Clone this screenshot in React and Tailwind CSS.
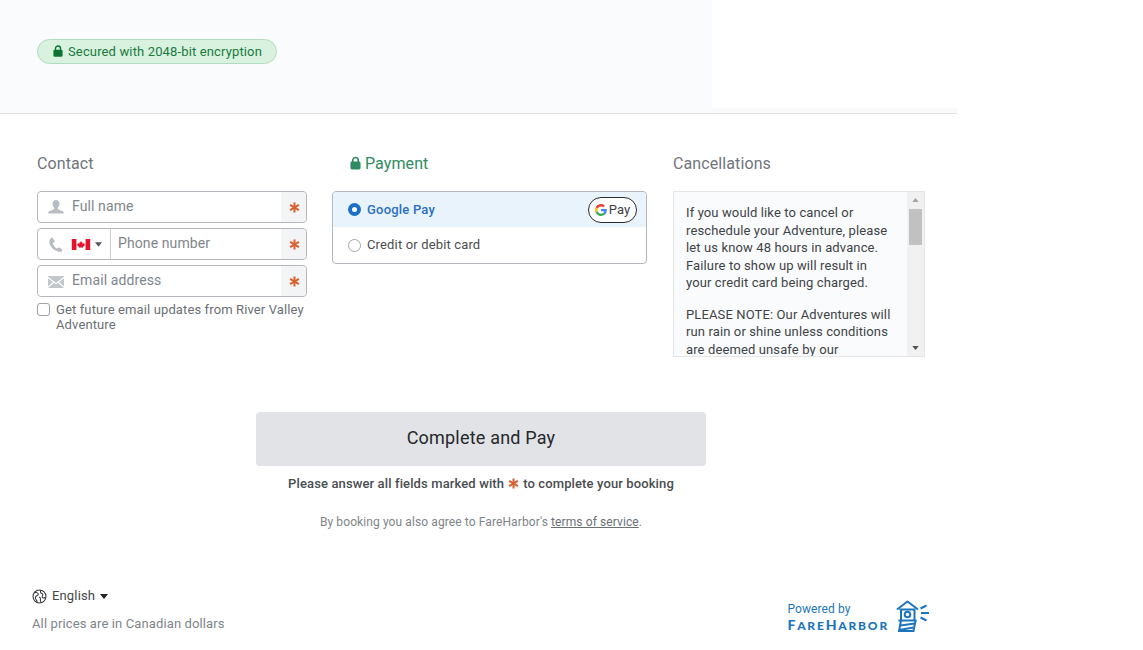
import { useState } from "react";

const Asterisk = ({ className = "" }) => (
  <svg viewBox="0 0 12 12" className={`w-[11px] h-[11px] shrink-0 ${className}`}>
    <g stroke="#d9602f" strokeWidth="2.2">
      <line x1="6" y1="0.5" x2="6" y2="11.5" />
      <line x1="1.2" y1="3.2" x2="10.8" y2="8.8" />
      <line x1="10.8" y1="3.2" x2="1.2" y2="8.8" />
    </g>
  </svg>
);

const Lock = ({ className, color }) => (
  <svg viewBox="0 0 12 14" className={className}>
    <path d="M3 6V4a3 3 0 0 1 6 0v2" fill="none" stroke={color} strokeWidth="1.7" />
    <rect x="0.5" y="5.4" width="11" height="8.600" rx="1.6" fill={color} />
  </svg>
);

const Flag = () => (
  <svg viewBox="0 0 20 12" className="w-[20px] h-[11px] shrink-0">
    <rect width="20" height="12" fill="#fff" />
    <rect width="5" height="12" fill="#e8112d" />
    <rect x="15" width="5" height="12" fill="#e8112d" />
    <path
      d="M10 2l.9 1.7.9-.4-.3 2 1.3-.9.4.9 1-.2-.4 1.4.5.4-2.3 1.800.2.900-2-.3h-.4l-2 .3.2-.9-2.300-1.800.5-.4-.4-1.400 1 .2.4-.9 1.300.9-.3-2 .9.4z"
      fill="#e8112d"
    />
  </svg>
);

const GoogleG = () => (
  <svg viewBox="0 0 48 48" className="w-[12px] h-[12px] shrink-0">
    <path fill="#EA4335" d="M24 9.500c3.500 0 6.700 1.200 9.200 3.600l6.900-6.900C35.900 2.400 30.500 0 24 0 14.600 0 6.500 5.400 2.600 13.200l8 6.200C12.500 13.600 17.800 9.500 24 9.500z" />
    <path fill="#4285F4" d="M47 24.500c0-1.600-.1-3.100-.4-4.500H24v9h12.900c-.6 3-2.200 5.500-4.700 7.200l7.700 6C44.400 38.100 47 31.900 47 24.500z" />
    <path fill="#FBBC05" d="M10.500 28.600c-.5-1.400-.8-3-.8-4.600s.3-3.200.8-4.600l-8-6.200C.9 16.500 0 20.100 0 24s.9 7.500 2.600 10.800l7.900-6.200z" />
    <path fill="#34A853" d="M24 48c6.500 0 11.900-2.100 15.900-5.800l-7.700-6c-2.200 1.400-4.900 2.300-8.200 2.300-6.200 0-11.500-4.200-13.400-9.800l-8 6.200C6.500 42.600 14.600 48 24 48z" />
  </svg>
);

const Caret = ({ className = "w-[8px] h-[5px]", color = "#55595f" }) => (
  <svg viewBox="0 0 8 5" className={`shrink-0 ${className}`}>
    <path d="M0 0h8L4 5z" fill={color} />
  </svg>
);

const Globe = () => (
  <svg viewBox="0 0 16 16" className="w-[15px] h-[15px] shrink-0" fill="none" stroke="#33373b" strokeWidth="1.1">
    <circle cx="8" cy="8" r="6.900" />
    <path d="M3 3.500c1.500.5 2.500.2 3.500 1.300 1 1.200-.8 2-1.700 2.600C3.700 8.200 3.300 9.500 4 10.800c.5.900 1.300 1.300 1.500 2.900" />
    <path d="M9.500 1.400C8.600 3 9.200 4.300 10.400 4.700c1.200.4 1.400 1.400.9 2.200-.7 1-.6 2 .2 2.500.8.500 1.800.1 2.800-.6" />
    <path d="M7.500 8.500c1 .3 1.700 1.200 1.500 2.300-.2 1-.2 2 .5 3.500" />
  </svg>
);

const Lighthouse = () => (
  <svg viewBox="0 0 34 32" className="w-[34px] h-[32px] shrink-0" fill="none" stroke="#1c75bc" strokeWidth="2">
    <path d="M1 9.500 11.500 1.500 22 9.500" strokeLinejoin="round" />
    <path d="M3.500 9.500h16M5 9.500v10.500M18.500 9.500V20M2.500 20.500h18" />
    <circle cx="11.500" cy="14.500" r="2.800" />
    <path d="M5 20.500 3 31h14.500l2-10.500M4.500 25.500l14-2M3.500 30l13.500-2.500" />
    <path d="M24.500 8.500l6-3M25 13h8M24.500 17.500l6 3" />
  </svg>
);

const RequiredCell = () => (
  <div className="w-[25px] self-stretch bg-[#f3f4f5] flex items-center justify-center pt-[1px] pl-[1px] rounded-r-[4px] shrink-0">
    <Asterisk />
  </div>
);

const Field = ({ children }) => (
  <div className="h-[32px] flex items-center border border-[#b4b8bd] rounded-[4px] bg-white">
    {children}
  </div>
);

const inputClass =
  "flex-1 min-w-0 h-full bg-transparent outline-none text-[14px] tracking-[0.1px] pb-[2px] placeholder:text-[#80868d]";

function ContactForm() {
  const [optIn, setOptIn] = useState(false);

  return (
    <div className="w-[270px] shrink-0">
      <h2 className="text-[16px] leading-[20px] tracking-[0.1px] text-[#70757c] mb-[17px]">Contact</h2>
      <div className="flex flex-col gap-[5px]">
        <Field>
          <div className="w-[34px] shrink-0 pl-[10px] pb-[1px]">
            <svg viewBox="0 0 16 14" className="w-[16px] h-[14px]">
              <path
                d="M8 0c2.200 0 3.500 1.600 3.500 3.800 0 1.600-.7 3-1.600 3.800v1.300c0 .6 4.600 1.400 5.600 3.100.2.4.3.9.4 1.400H.1c.1-.5.2-1 .4-1.400 1-1.700 5.600-2.500 5.600-3.100V7.600C5.200 6.800 4.500 5.400 4.500 3.800 4.500 1.600 5.800 0 8 0z"
                fill="#b9bdc2"
              />
            </svg>
          </div>
          <input placeholder="Full name" className={inputClass} />
          <RequiredCell />
        </Field>
        <Field>
          <div className="w-[73px] self-stretch shrink-0 flex items-center border-r border-[#c9ccd0]">
            <svg viewBox="0 0 10.500 16" preserveAspectRatio="none" className="w-[13px] h-[15px] ml-[11px] shrink-0">
              <path
                d="M2.700.6 4.600 4.300c.2.400.1.800-.2 1L3.300 6.200c-.2.200-.3.500-.2.800.5 1.900 1.500 3.700 2.800 5 .2.200.5.200.8.100l1.200-.7c.4-.2.800-.1 1 .2l2.300 2.500c.3.300.2.800-.2 1-1 .7-2.300 1-3.400.5C3.900 14.400 1 10.500.3 6.100.1 4.200.7 2.200 1.800.7c.2-.3.700-.4.900-.1z"
                fill="#b9bdc2"
              />
            </svg>
            <span className="ml-[9px] flex"><Flag /></span>
            <Caret className="ml-[4px] w-[7px] h-[5px]" />
          </div>
          <input placeholder="Phone number" className={`${inputClass} pl-[7px]`} />
          <RequiredCell />
        </Field>
        <Field>
          <div className="w-[34px] shrink-0 pl-[10px] pt-[2px]">
            <svg viewBox="0 0 16 12" className="w-[16px] h-[12px]">
              <path d="M0 0h16v.8L8 7 0 .8z" fill="#c3c7cb" />
              <path d="M0 2.200 5 6 0 10.500zM16 2.200 11 6l5 4.500zM6 6.800l2 1.500 2-1.500 6 5.200H0z" fill="#c3c7cb" />
            </svg>
          </div>
          <input placeholder="Email address" className={inputClass} />
          <RequiredCell />
        </Field>
      </div>
      <label className="mt-[5px] flex gap-[6px] text-[13px] leading-[15px] tracking-[0.12px] text-[#6b7075]">
        <input
          type="checkbox"
          checked={optIn}
          onChange={(e) => setOptIn(e.target.checked)}
          className="appearance-none w-[13px] h-[13px] mt-[1px] border border-[#9ea3a8] rounded-[3px] bg-white shrink-0"
        />
        <span>Get future email updates from River Valley Adventure</span>
      </label>
    </div>
  );
}

function PaymentBox() {
  return (
    <div className="w-[315px] ml-[25px] shrink-0">
      <h2 className="text-[16px] leading-[20px] tracking-[0.1px] text-[#2e8b62] mb-[17px] flex items-center gap-[4px] pl-[18px]">
        <Lock className="w-[11px] h-[14px] mb-[2px]" color="#2e8b62" />
        Payment
      </h2>
      <div className="border border-[#b4b8bd] rounded-[4px] overflow-hidden h-[73px]">
        <div className="h-[35px] bg-[#e9f3fc] flex items-center pl-[15px] pr-[9px]">
          <span className="w-[13px] h-[13px] rounded-full bg-[#1a6fc9] flex items-center justify-center shrink-0">
            <span className="w-[5px] h-[5px] rounded-full bg-white" />
          </span>
          <span className="ml-[6px] text-[13px] font-medium tracking-[0.2px] text-[#2a6fc0] flex-1">Google Pay</span>
          <span className="w-[49px] h-[26px] rounded-full border border-[#2b2b2b] bg-white flex items-center justify-center gap-[2px]">
            <GoogleG />
            <span className="text-[13px] text-[#3c4043]">Pay</span>
          </span>
        </div>
        <div className="h-[36px] flex items-center pl-[15px]">
          <span className="w-[13px] h-[13px] rounded-full border border-[#a3a7ab] bg-white shrink-0" />
          <span className="ml-[6px] text-[13px] tracking-[0.15px] text-[#4a4d50]">Credit or debit card</span>
        </div>
      </div>
    </div>
  );
}

function CancellationBox() {
  return (
    <div className="w-[252px] ml-[26px] shrink-0">
      <h2 className="text-[16px] leading-[20px] tracking-[0.1px] text-[#70757c] mb-[17px]">Cancellations</h2>
      <div className="h-[166px] border border-[#e4e5e7] bg-[#fafbfd] flex">
        <div className="flex-1 overflow-hidden pl-[12px] pr-[14px] pt-[12px] text-[13px] leading-[17.500px] tracking-[0.12px] text-[#3f4347]">
          <p className="mb-[14px]">
            If you would like to cancel or reschedule your Adventure, please let us know 48 hours in advance. Failure to show up will result in your credit card being charged.
          </p>
          <p>
            PLEASE NOTE: Our Adventures will run rain or shine unless conditions are deemed unsafe by our
          </p>
        </div>
        <div className="w-[17px] shrink-0 bg-[#f1f1f1] flex flex-col items-center justify-between py-[6px]">
          <div className="flex flex-col items-center self-stretch">
            <Caret className="rotate-180 w-[7px] h-[4px]" color="#a3a3a3" />
            <div className="w-[13px] h-[36px] bg-[#c1c1c1] mt-[7px]" />
          </div>
          <Caret className="w-[7px] h-[4px]" color="#505050" />
        </div>
      </div>
    </div>
  );
}

export default function App() {
  return (
    <div className="w-[957px] font-['Roboto',sans-serif] bg-white">
      {/* top band */}
      <div className="h-[114px] flex border-b border-[#dfe0e2]">
        <div className="w-[712px] bg-[#fafbfd] pl-[37px] pt-[39px]">
          <div className="w-[240px] h-[25px] rounded-full border border-[#b2dcc2] bg-[#d8f2df] flex items-center pl-[15px] gap-[5px] text-[13px] tracking-[0.14px] text-[#1a7a3e]">
            <Lock className="w-[10px] h-[12px] mb-[1px]" color="#0d7332" />
            Secured with 2048-bit encryption
          </div>
        </div>
        <div className="flex-1 flex flex-col justify-end">
          <div className="h-[5px] bg-[#fafafa]" />
        </div>
      </div>

      {/* columns */}
      <div className="flex pl-[37px] pt-[40px] h-[298px]">
        <ContactForm />
        <PaymentBox />
        <CancellationBox />
      </div>

      {/* submit */}
      <div className="flex flex-col items-center w-[450px] ml-[256px]">
        <button className="w-full h-[54px] rounded-[4px] bg-[#e1e3e6] text-[18px] tracking-[0.2px] pb-[3px] text-[#24282c]">
          Complete and Pay
        </button>
        <p className="mt-[9px] flex items-center gap-[4px] text-[13px] leading-[17px] tracking-[0.12px] font-medium text-[#4a4d50]">
          Please answer all fields marked with <Asterisk /> to complete your booking
        </p>
        <p className="mt-[22px] text-[12px] leading-[16px] tracking-[0.1px] text-[#7f848a]">
          By booking you also agree to FareHarbor's <span className="underline text-[#6b7075]">terms of service</span>.
        </p>
      </div>

      {/* footer */}
      <div className="flex justify-between items-end pl-[32px] pr-[27px] mt-[58px]">
        <div>
          <div className="flex items-center gap-[5px] text-[13px] leading-[16px] tracking-[0.15px] text-[#44484c]">
            <Globe />
            English
            <Caret color="#222" />
          </div>
          <p className="mt-[12px] text-[13px] leading-[16px] tracking-[0.12px] text-[#7f848a]">All prices are in Canadian dollars</p>
        </div>
        <div className="flex items-start gap-[7px] -mb-[2px]">
          <div className="text-[#1c75bc] pt-[2px]">
            <p className="text-[12px] leading-[14px] tracking-[0.1px]">Powered by</p>
            <p className="font-['Lato',sans-serif] leading-[16px] font-black tracking-[1.8px]">
              <span className="text-[14px]">F</span><span className="text-[12px]">ARE</span><span className="text-[14px]">H</span><span className="text-[12px]">ARBOR</span>
            </p>
          </div>
          <Lighthouse />
        </div>
      </div>
    </div>
  );
}
